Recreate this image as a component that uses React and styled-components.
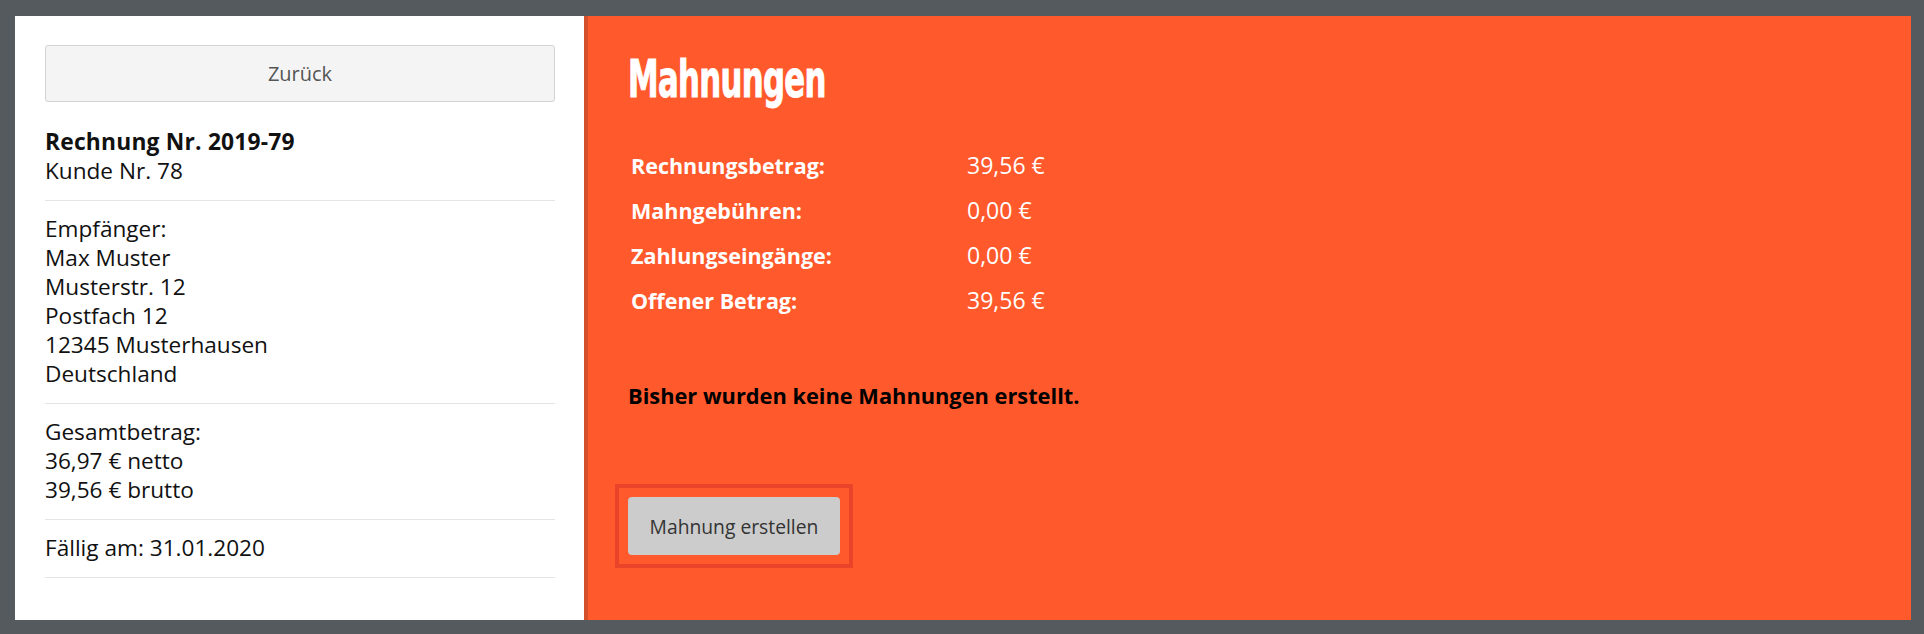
import React from "react";
import styled, { createGlobalStyle } from "styled-components";

const GlobalStyle = createGlobalStyle`
  html, body {
    margin: 0;
    padding: 0;
  }
  body {
    background: #555a5e;
    font-family: "Open Sans", "Noto Sans", sans-serif;
    color: #111;
  }
`;

const Page = styled.div`
  display: flex;
  height: 634px;
  box-sizing: border-box;
  padding: 16px 13px 14px 15px;
`;

const Sidebar = styled.aside`
  width: 569px;
  flex-shrink: 0;
  background: #fff;
  box-sizing: border-box;
  padding: 29px 29px 0 30px;
`;

const BackButton = styled.button`
  display: block;
  width: 100%;
  height: 57px;
  margin-bottom: 12px;
  background: #f4f4f4;
  border: 1px solid #d4d4d4;
  border-radius: 3px;
  color: #555;
  font-family: inherit;
  font-size: 20px;
  cursor: pointer;
`;

const InfoBlock = styled.div`
  padding: 13px 0 15px;
  border-bottom: 1px solid #e4e4e4;
  font-size: 22.6px;
  line-height: 29px;
`;

const Strong = styled.div`
  font-weight: 700;
  font-size: 22.8px;
  letter-spacing: 0.2px;
`;

const Main = styled.main`
  flex: 1;
  background: #ff592c;
  border-left: 4px solid #d4502a;
  padding: 38px 40px 0;
  color: #fff;
`;

const Heading = styled.h1`
  margin: 0;
  height: 51px;
  font-family: "DejaVu Sans", sans-serif;
  font-stretch: condensed;
  font-weight: 700;
  font-size: 51px;
  line-height: 51px;
  letter-spacing: -1px;
  transform: scaleX(0.67);
  transform-origin: left center;
  -webkit-text-stroke: 1px #fff;
`;

const Summary = styled.div`
  display: grid;
  grid-template-columns: 336px auto;
  margin-top: 38px;
  padding-left: 3px;
  font-size: 21.5px;
  line-height: 45px;
`;

const Label = styled.div`
  font-weight: 700;
`;

const Value = styled.div`
  font-weight: 400;
  font-size: 23px;
`;

const Notice = styled.p`
  margin: 58px 0 0;
  color: #000;
  font-weight: 700;
  font-size: 21.8px;
  line-height: 29px;
`;

const FocusFrame = styled.div`
  width: fit-content;
  margin-top: 87px;
  outline: 4px solid #e9432a;
  outline-offset: 9px;
`;

const CreateButton = styled.button`
  display: block;
  width: 212px;
  height: 58px;
  background: #ccc;
  border: none;
  border-radius: 4px;
  color: #333;
  font-family: inherit;
  font-size: 19.3px;
  cursor: pointer;
`;

const rows = [
  ["Rechnungsbetrag:", "39,56 €"],
  ["Mahngebühren:", "0,00 €"],
  ["Zahlungseingänge:", "0,00 €"],
  ["Offener Betrag:", "39,56 €"],
];

const App = () => (
  <>
    <GlobalStyle />
    <Page>
      <Sidebar>
        <BackButton>Zurück</BackButton>
        <InfoBlock>
          <Strong>Rechnung Nr. 2019-79</Strong>
          <div>Kunde Nr. 78</div>
        </InfoBlock>
        <InfoBlock>
          <div>Empfänger:</div>
          <div>Max Muster</div>
          <div>Musterstr. 12</div>
          <div>Postfach 12</div>
          <div>12345 Musterhausen</div>
          <div>Deutschland</div>
        </InfoBlock>
        <InfoBlock>
          <div>Gesamtbetrag:</div>
          <div>36,97 € netto</div>
          <div>39,56 € brutto</div>
        </InfoBlock>
        <InfoBlock>
          <div>Fällig am: 31.01.2020</div>
        </InfoBlock>
      </Sidebar>
      <Main>
        <Heading>Mahnungen</Heading>
        <Summary>
          {rows.map(([label, value]) => (
            <React.Fragment key={label}>
              <Label>{label}</Label>
              <Value>{value}</Value>
            </React.Fragment>
          ))}
        </Summary>
        <Notice>Bisher wurden keine Mahnungen erstellt.</Notice>
        <FocusFrame>
          <CreateButton>Mahnung erstellen</CreateButton>
        </FocusFrame>
      </Main>
    </Page>
  </>
);

export default App;
